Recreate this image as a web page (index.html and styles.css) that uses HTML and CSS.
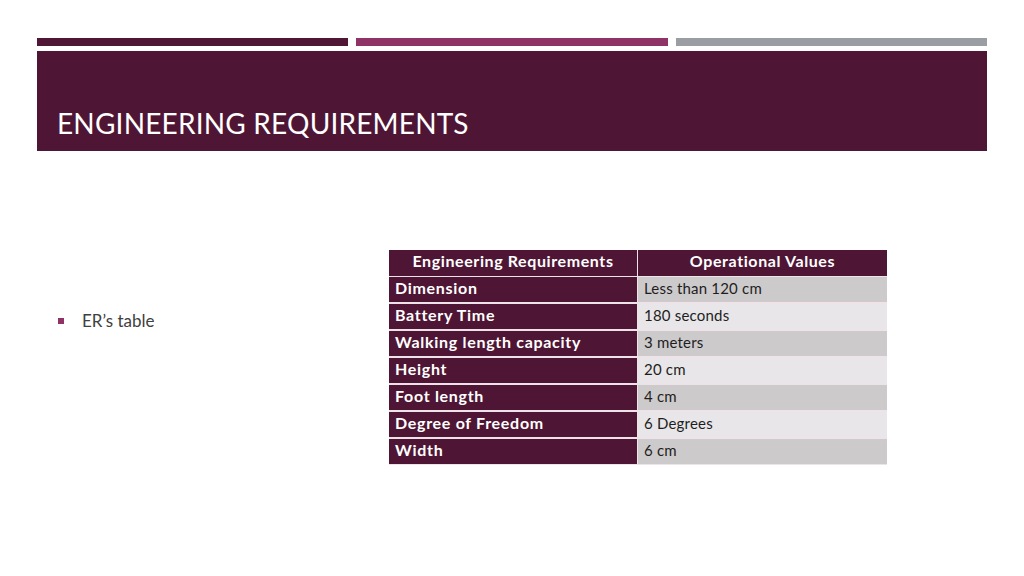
FILE: index.html
```html
<!DOCTYPE html>
<html>
<head>
<meta charset="utf-8">
<link rel="stylesheet" href="styles.css">
</head>
<body>
<div class="slide">
  <div class="bars">
    <div class="bar bar-dark"></div>
    <div class="bar bar-mag"></div>
    <div class="bar bar-gray"></div>
  </div>
  <div class="header">
    <h1 class="title">ENGINEERING REQUIREMENTS</h1>
  </div>
  <div class="content">
    <ul class="bullets">
      <li>ER’s table</li>
    </ul>
    <div class="table">
      <div class="th">Engineering Requirements</div>
      <div class="th">Operational Values</div>
      <div class="key">Dimension</div><div class="val odd">Less than 120 cm</div>
      <div class="key">Battery Time</div><div class="val even">180 seconds</div>
      <div class="key">Walking length capacity</div><div class="val odd">3 meters</div>
      <div class="key">Height</div><div class="val even">20 cm</div>
      <div class="key">Foot length</div><div class="val odd">4 cm</div>
      <div class="key">Degree of Freedom</div><div class="val even">6 Degrees</div>
      <div class="key">Width</div><div class="val odd">6 cm</div>
    </div>
  </div>
</div>
</body>
</html>
```
FILE: styles.css
```css
html, body {
  margin: 0;
  padding: 0;
  background: #ffffff;
}
.slide {
  width: 1024px;
  height: 576px;
  font-family: "Lato", "Open Sans", sans-serif;
  padding: 38px 37px 0 37px;
  box-sizing: border-box;
}
.bars {
  display: flex;
  gap: 8px;
  height: 8px;
}
.bar { flex: 1; }
.bar-dark { background: #4f1735; }
.bar-mag { background: #8f3266; }
.bar-gray { background: #9a9ea3; }
.header {
  margin-top: 5px;
  height: 100px;
  background: #4e1634;
  display: flex;
  align-items: flex-end;
  padding: 0 0 13px 20px;
  box-sizing: border-box;
}
.title {
  margin: 0;
  color: #ffffff;
  font-weight: 400;
  font-size: 28px;
  letter-spacing: 0.2px;
  line-height: 30px;
}
.content {
  display: flex;
  margin-top: 99px;
}
.bullets {
  list-style: none;
  margin: 0;
  padding: 61px 0 0 21px;
  width: 352px;
  box-sizing: border-box;
}
.bullets li {
  position: relative;
  padding-left: 24px;
  font-size: 17px;
  color: #404040;
  line-height: 20px;
}
.bullets li::before {
  content: "";
  position: absolute;
  left: 0;
  top: 7px;
  width: 6px;
  height: 6px;
  background: #8f3266;
}
.table {
  display: grid;
  grid-template-columns: 248px 249px;
  grid-auto-rows: 25px;
  column-gap: 1px;
  row-gap: 2px;
  width: 498px;
  background: #efe3ea;
  border-bottom: 1px solid #efe3ea;
}
.table > div {
  font-size: 15px;
  line-height: 22px;
  white-space: nowrap;
}
.th {
  background: #4e1634;
  color: #ffffff;
  font-weight: 700;
  font-size: 16px !important;
  letter-spacing: 0.6px;
  text-align: center;
  height: 26px;
}
.key {
  background: #4e1634;
  color: #ffffff;
  font-weight: 700;
  font-size: 16px !important;
  letter-spacing: 0.7px;
  padding-left: 6px;
}
.val {
  color: #1e1e1e;
  padding-left: 6px;
  letter-spacing: 0.2px;
}
.val.odd { background: #cdcacc; }
.val.even { background: #e8e6e8; }
```
